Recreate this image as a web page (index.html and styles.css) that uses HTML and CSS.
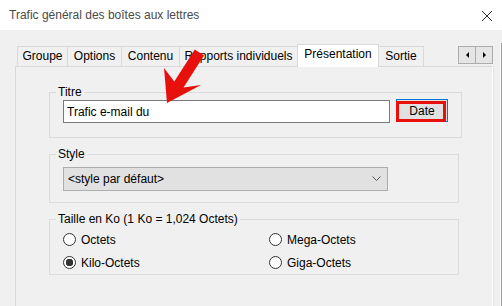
FILE: index.html
```html
<!DOCTYPE html>
<html lang="fr">
<head>
    <meta charset="UTF-8">
    <title>Trafic général des boîtes aux lettres</title>
    <link rel="stylesheet" href="styles.css">
</head>
<body>
    <div class="titlebar">
        <span class="title">Trafic général des boîtes aux lettres</span>
        <svg class="close" width="12" height="12" viewBox="0 0 12 12">
            <path d="M1 1 L11 11 M11 1 L1 11" stroke="#333" stroke-width="1" fill="none"/>
        </svg>
    </div>

    <div class="dialog">
        <div class="tabctl">
            <div class="tabrow">
                <div class="tab tab-groupe">Groupe</div>
                <div class="tab tab-options">Options</div>
                <div class="tab tab-contenu">Contenu</div>
                <div class="tab tab-rapports">Rapports individuels</div>
                <div class="tab tab-pres active">Présentation</div>
                <div class="tab tab-sortie">Sortie</div>
                <div class="scroller">
                    <button class="scroll-btn"><span class="tri-left"></span></button>
                    <button class="scroll-btn"><span class="tri-right"></span></button>
                </div>
            </div>

            <div class="panel">
                <fieldset class="group group-titre">
                    <legend>Titre</legend>
                    <div class="title-row">
                        <input type="text" class="field" value="Trafic e-mail du">
                        <button class="date-btn">Date</button>
                    </div>
                </fieldset>

                <fieldset class="group group-style">
                    <legend>Style</legend>
                    <div class="select">
                        <span>&lt;style par défaut&gt;</span>
                        <svg width="9" height="6" viewBox="0 0 9 6">
                            <path d="M0.5 0.5 L4.5 4.5 L8.5 0.5" stroke="#555" fill="none"/>
                        </svg>
                    </div>
                </fieldset>

                <fieldset class="group group-taille">
                    <legend>Taille en Ko (1 Ko = 1,024 Octets)</legend>
                    <div class="radios">
                        <label class="radio"><input type="radio" name="taille">Octets</label>
                        <label class="radio"><input type="radio" name="taille">Mega-Octets</label>
                        <label class="radio"><input type="radio" name="taille" checked>Kilo-Octets</label>
                        <label class="radio"><input type="radio" name="taille">Giga-Octets</label>
                    </div>
                </fieldset>
            </div>
        </div>
    </div>

    <!-- annotation arrow pointing at the title field -->
    <svg class="arrow" width="50" height="64" viewBox="0 0 50 64">
        <polygon points="9,59 6,24 16.3,37.5 36.8,5.6 46,11.6 25.5,43.5 43,41" fill="#e8100c"/>
    </svg>
</body>
</html>
```

FILE: styles.css
```css
/* Reset */
body, fieldset, legend, input, button {
    margin: 0;
    padding: 0;
}

body {
    width: 502px;
    height: 306px;
    overflow: hidden;
    position: relative;
    background: #f0f0f0;
    font-family: "Liberation Sans", Arial, sans-serif;
    font-size: 12px;
    color: #000;
}

/* Title bar */
.titlebar {
    height: 30px;
    background: #fff;
    display: flex;
    align-items: center;
    padding-left: 9px;
    padding-right: 9px;
}

.title {
    color: #4a4a4a;
    flex: 1;
}

.close {
    margin-top: 1px;
}

/* Dialog body */
.dialog {
    height: 276px;
    overflow: hidden;
}

.tabctl {
    margin-top: 13px;
    padding-top: 1px;
    border-right: 1px solid #a0a0a0;
    box-shadow: inset -1px 0 0 #fafafa;
    height: 300px;
}

.tabrow {
    display: flex;
    align-items: flex-end;
    height: 22px;
    padding-left: 17px;
}

.tab {
    box-sizing: border-box;
    height: 20px;
    border: 1px solid #d9d9d9;
    border-bottom: none;
    margin-left: -1px;
    text-align: center;
    line-height: 19px;
    background: #f0f0f0;
}

.tab-groupe { width: 51px; margin-left: 0; }
.tab-options { width: 55px; }
.tab-contenu { width: 59px; }
.tab-rapports { width: 119px; }
.tab-pres { width: 82px; }
.tab-sortie { width: 46px; }

.tab.active {
    height: 23px;
    margin-bottom: -1px;
    background: #fff;
    line-height: 18px;
    position: relative;
    z-index: 1;
}

.scroller {
    display: flex;
    align-self: flex-start;
    margin-top: 2px;
    margin-left: auto;
    margin-right: 8px;
}

.scroll-btn {
    width: 18px;
    height: 18px;
    border: 1px solid #adadad;
    background: #e5e5e5;
    display: flex;
    align-items: center;
    justify-content: center;
}

.scroll-btn + .scroll-btn {
    margin-left: -1px;
}

.tri-left {
    border-top: 3px solid transparent;
    border-bottom: 3px solid transparent;
    border-right: 3px solid #000;
}

.tri-right {
    border-top: 3px solid transparent;
    border-bottom: 3px solid transparent;
    border-left: 3px solid #000;
}

/* Tab page */
.panel {
    margin-left: 15px;
    margin-right: 8px;
    height: 280px;
    border: 1px solid #d9d9d9;
    border-right-color: #fff;
    box-shadow: 1px 0 0 #e3e3e3;
    padding-top: 17px;
}

/* Group boxes */
.group {
    width: 410px;
    box-sizing: border-box;
    margin-left: 33px;
    border: 1px solid #dcdcdc;
    padding: 0 13px;
}

.group legend {
    line-height: 16px;
    padding: 0 2px;
    margin-left: -7px;
}

.group-titre {
    padding-bottom: 14px;
}

.group-style {
    margin-top: 8px;
    padding-top: 5px;
    padding-bottom: 11px;
}

.group-taille {
    margin-top: 8px;
    padding-top: 1px;
    padding-bottom: 0;
}

/* Title row */
.title-row {
    display: flex;
    align-items: flex-start;
}

.field {
    box-sizing: border-box;
    width: 327px;
    height: 23px;
    border: 1px solid #7a7a7a;
    background: #fff;
    font-family: inherit;
    font-size: 12px;
    padding-left: 3px;
    outline: none;
}

.date-btn {
    box-sizing: border-box;
    position: relative;
    width: 52px;
    height: 23px;
    margin-left: 6px;
    margin-top: -1px;
    border: 1px solid #0078d7;
    background: #e1e1e1;
    font-family: inherit;
    font-size: 12px;
    color: #000;
}

/* red highlight box drawn over the button */
.date-btn::after {
    content: "";
    position: absolute;
    left: -1px;
    top: 1px;
    right: 1px;
    bottom: -1px;
    border: 3px solid #e8100c;
}

/* Combo box */
.select {
    box-sizing: border-box;
    width: 325px;
    height: 24px;
    border: 1px solid #adadad;
    background: #e1e1e1;
    display: flex;
    align-items: center;
    justify-content: space-between;
    padding-left: 4px;
    padding-right: 6px;
}

/* Radio buttons */
.radios {
    display: grid;
    grid-template-columns: 206px 1fr;
    grid-auto-rows: 23px;
}

.radio {
    display: flex;
    align-items: center;
}

.radio input {
    appearance: none;
    -webkit-appearance: none;
    width: 13px;
    height: 13px;
    border: 1px solid #333;
    border-radius: 50%;
    background: #fff;
    margin: 0 5px 0 0;
    box-sizing: border-box;
}

.radio input:checked {
    background: radial-gradient(circle, #333 3.5px, #fff 4px);
}

/* Annotation */
.arrow {
    position: absolute;
    left: 158px;
    top: 44px;
}
```
